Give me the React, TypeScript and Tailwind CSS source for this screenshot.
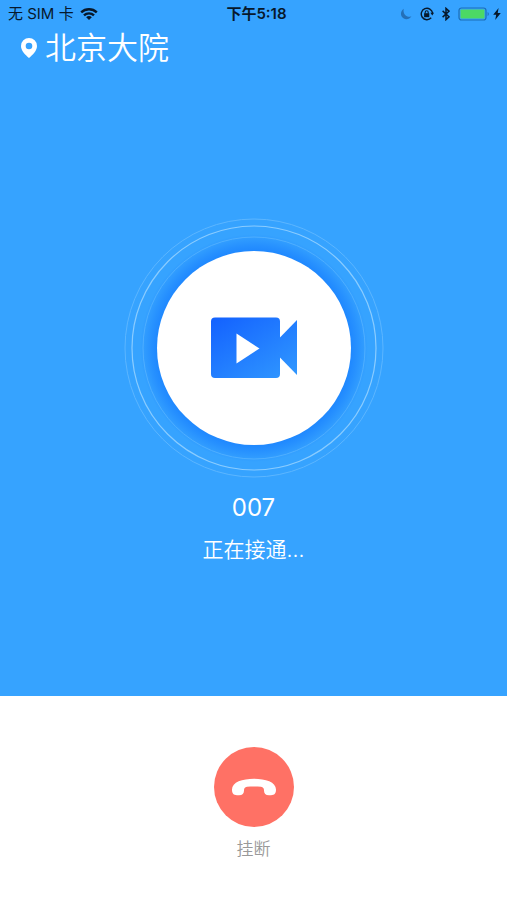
const sans = "font-['Inter','Noto_Sans_CJK_SC',sans-serif]";

function StatusBar() {
  return (
    <div className="grid h-7 grid-cols-3 items-center text-[15px] leading-5 text-[#07182b]">
      <div className="flex items-center gap-1.5 whitespace-nowrap pl-2">
        <span>无 SIM 卡</span>
        <WifiIcon />
      </div>
      <time className="whitespace-nowrap pl-1.5 text-center font-semibold">下午5:18</time>
      <div className="flex items-center justify-end pr-1.5">
        <MoonIcon />
        <RotationLockIcon />
        <BluetoothIcon />
        <BatteryIcon />
        <BoltIcon />
      </div>
    </div>
  );
}

function WifiIcon() {
  return (
    <svg className="h-3 w-[18px]" viewBox="0 0 18 12" fill="none" stroke="currentColor" strokeWidth="2.4" aria-hidden="true">
      <path d="M1.2 4.4C5.6.2 12.4.2 16.8 4.4" />
      <path d="M4 7.4C6.8 4.7 11.2 4.7 14 7.4" />
      <path d="M9 12 6.2 9.2c1.6-1.5 4-1.5 5.6 0z" fill="currentColor" stroke="none" />
    </svg>
  );
}

function MoonIcon() {
  return (
    <svg className="mr-2 h-3 w-3" viewBox="0 0 12 12" aria-hidden="true">
      <path d="M3.8.7C2.5 5.6 6.2 9.6 11.4 8.6 9.6 11.2 6 12 3.4 10.2.1 8 .1 3 3.8.7z" fill="#2470b8" />
    </svg>
  );
}

function RotationLockIcon() {
  return (
    <svg className="mr-2 h-3.5 w-3.5" viewBox="0 0 14 14" fill="none" stroke="currentColor" aria-hidden="true">
      <path d="M11.2 10.8A5.7 5.7 0 1 1 12.6 6.2" strokeWidth="1.4" />
      <path d="M10.4 5.800h3.600l-1.700 2.800z" fill="currentColor" stroke="none" />
      <path d="M4.1 6.2h5.200v4h-5.200z" fill="currentColor" stroke="none" />
      <path d="M5.2 6.600V5.200a1.500 1.500 0 0 1 3 0v1.400" strokeWidth="1.1" />
    </svg>
  );
}

function BluetoothIcon() {
  return (
    <svg className="mr-2 h-3.5 w-2" viewBox="0 0 8 14" fill="none" stroke="currentColor" strokeWidth="1.5" aria-hidden="true">
      <path d="M.6 3.900 7 9.800 4 12.600V1.400l3 2.800L.6 10.100" />
    </svg>
  );
}

function BatteryIcon() {
  return (
    <svg className="mr-[3px] h-3.5 w-8" viewBox="0 0 32 14" aria-hidden="true">
      <rect x="1" y="1" width="27" height="12" rx="2.500" fill="none" stroke="#1d6fb5" strokeWidth="1.2" />
      <rect x="2.500" y="2.500" width="24" height="9" rx="0.8" fill="#4cd964" />
      <path d="M29.600 5c1.600.5 1.600 3.500 0 4z" fill="#1d6fb5" />
    </svg>
  );
}

function BoltIcon() {
  return (
    <svg className="h-3 w-2" viewBox="0 0 8 12" fill="currentColor" aria-hidden="true">
      <path d="M5.600 0 .2 6.800h3L2.200 12 7.800 4.900H4.700z" />
    </svg>
  );
}

function PinIcon() {
  return (
    <svg className="h-5 w-4" viewBox="0 0 16 20" fill="white" aria-hidden="true">
      <path fillRule="evenodd" d="M8 0a8 8 0 0 1 8 8c0 4.600-4 8.600-8 12C4 16.600 0 12.600 0 8a8 8 0 0 1 8-8zm0 4.700a3.300 3.300 0 1 0 0 6.600 3.300 3.300 0 0 0 0-6.600z" />
    </svg>
  );
}

function VideoBadge() {
  return (
    <svg className="size-[260px]" viewBox="0 0 260 260" role="img" aria-label="视频通话">
      <defs>
        <radialGradient id="glow" gradientUnits="userSpaceOnUse" cx="130" cy="130" r="114">
          <stop offset="0.85" stopColor="#1f88ff" />
          <stop offset="0.9" stopColor="#2690ff" />
          <stop offset="1" stopColor="#36a3ff" />
        </radialGradient>
        <linearGradient id="camera" gradientUnits="userSpaceOnUse" x1="92" y1="100" x2="142" y2="178">
          <stop offset="0" stopColor="#1463ff" />
          <stop offset="1" stopColor="#3098ff" />
        </linearGradient>
      </defs>
      <circle cx="130" cy="130" r="114" fill="url(#glow)" />
      <g fill="none">
        <circle cx="130" cy="130" r="129" stroke="#5cb6ff" />
        <circle cx="130" cy="130" r="122" stroke="#8accff" strokeWidth="1.2" />
        <circle cx="130" cy="130" r="111" stroke="#4fafff" />
      </g>
      <circle cx="130" cy="130" r="97" fill="white" />
      <rect x="87" y="99.500" width="69" height="60.500" rx="4" fill="url(#camera)" />
      <path d="M155 120.500 173 102v55L155 138.500z" fill="url(#camera)" />
      <path d="M112.500 115.500 135.500 130.500 112.500 145.500z" fill="white" />
    </svg>
  );
}

function HangUpIcon() {
  return (
    <svg className="h-[18px] w-11" viewBox="0 0 44 18" fill="white" aria-hidden="true">
      <path d="M0 11.500C0 4 10.500.7 22 .7S44 4 44 11.500c0 4-1.500 5.700-5 5.700h-2c-3.500 0-5-1.600-5-4.700 0-2.200-.8-3.400-3-3.700-4-.5-10-.5-14 0-2.200.3-3 1.500-3 3.700 0 3.100-1.500 4.700-5 4.700H5c-3.500 0-5-1.700-5-5.700z" />
    </svg>
  );
}

export default function App() {
  return (
    <main className={`flex min-h-screen flex-col bg-white ${sans}`}>
      <section className="flex flex-1 flex-col bg-[#36a3ff] text-white">
        <StatusBar />
        <header className="flex h-10 items-center gap-2 pl-[21px]">
          <PinIcon />
          <h1 className="text-[31px] leading-10 font-[350]">北京大院</h1>
        </header>
        <div className="flex flex-1 flex-col items-center pt-[150px] pb-32">
          <VideoBadge />
          <p className="mt-3.5 text-2xl leading-8">007</p>
          <p className="mt-2.5 text-[21px] leading-8 font-[350]">正在接通...</p>
        </div>
      </section>
      <footer className="flex flex-col items-center pt-[51px] pb-[39px]">
        <button type="button" className="flex flex-col items-center gap-2.5 text-[17px] leading-6 text-[#999999]">
          <span className="flex size-20 items-center justify-center rounded-full bg-[#ff7165]">
            <HangUpIcon />
          </span>
          <span className="font-[350]">挂断</span>
        </button>
      </footer>
    </main>
  );
}
